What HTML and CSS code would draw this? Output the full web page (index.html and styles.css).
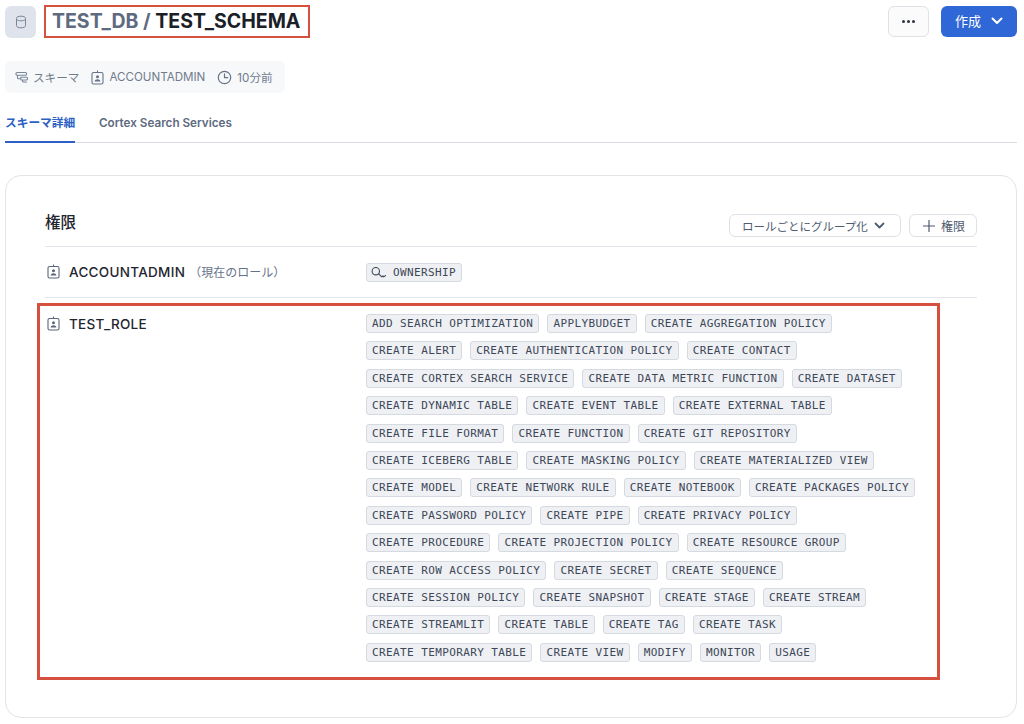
FILE: index.html
```html
<!DOCTYPE html>
<html lang="ja">
<head>
<meta charset="utf-8">
<title>TEST_SCHEMA</title>
<link rel="stylesheet" href="styles.css">
</head>
<body>
<div class="page">
  <header class="top">
    <div class="db-icon">
      <svg width="12" height="14" viewBox="0 0 12 14" fill="none" stroke="#7a8599" stroke-width="1"><path d="M1.500 3.300C1.500 2 3.500 1.200 6 1.200s4.500.8 4.500 2.100v7.400c0 1.300-2 2.100-4.500 2.100s-4.500-.8-4.500-2.100z"/><path d="M1.500 4.300C2.300 5.300 4 5.800 6 5.800s3.700-.5 4.500-1.500"/></svg>
    </div>
    <h1 class="title"><span class="title-db">TEST_DB /</span> TEST_SCHEMA</h1>
    <div class="actions">
      <button class="more"><span class="dot"></span><span class="dot"></span><span class="dot"></span></button>
      <button class="create">作成
        <svg width="12" height="8" viewBox="0 0 12 8" fill="none" stroke="#fff" stroke-width="2" stroke-linecap="round" stroke-linejoin="round"><path d="M1.500 1.500 6 6l4.500-4.500"/></svg>
      </button>
    </div>
  </header>

  <div class="meta">
    <span class="meta-item">
      <svg width="13" height="13" viewBox="0 0 13 13" fill="none" stroke="#7a8599" stroke-width="1.100" stroke-linecap="round" stroke-linejoin="round"><path d="M2 1.500h8.500a1 1 0 0 1 1 1v.7a1 1 0 0 1-1 1H2a1 1 0 0 1-1-1v-.7a1 1 0 0 1 1-1ZM2.500 4.500v2.200a1 1 0 0 0 1 1h2M5.800 6.200h5.400a1 1 0 0 1 0 2.800H6.800a1 1 0 0 1-1-1V6.200ZM7.500 9v1a1 1 0 0 0 1 1h3"/></svg>
      スキーマ</span>
    <span class="meta-item">
      <svg width="13" height="15" viewBox="0 0 13 15" fill="none" stroke="#66728a" stroke-width="1.100"><rect x="1" y="2.500" width="11" height="11.500" rx="1.600"/><path d="M6.500 .5v2"/><circle cx="6.500" cy="6.800" r="1.500" fill="#66728a" stroke="none"/><path d="M3.600 11.400c.2-1.500 1.400-2.200 2.900-2.200s2.700.7 2.900 2.200z" fill="#66728a" stroke="none"/></svg>
      ACCOUNTADMIN</span>
    <span class="meta-item">
      <svg width="15" height="15" viewBox="0 0 15 15" fill="none" stroke="#66728a" stroke-width="1.200" stroke-linecap="round" stroke-linejoin="round"><circle cx="7.500" cy="7.500" r="6.200"/><path d="M7.500 3.800v3.900h3.200"/></svg>
      10分前</span>
  </div>

  <nav class="tabs">
    <a class="tab tab-active">スキーマ詳細</a>
    <a class="tab">Cortex Search Services</a>
  </nav>

  <section class="card">
    <div class="card-head">
      <h2 class="card-title">権限</h2>
      <div class="card-actions">
        <button class="ghost">ロールごとにグループ化
          <svg width="11" height="8" viewBox="0 0 11 8" fill="none" stroke="#4f5b70" stroke-width="1.800" stroke-linecap="round" stroke-linejoin="round"><path d="M1.500 1.500 5.500 5.500l4-4"/></svg>
        </button>
        <button class="ghost ghost-add">
          <svg width="12" height="12" viewBox="0 0 12 12" fill="none" stroke="#4f5b70" stroke-width="1.200" stroke-linecap="round"><path d="M6 .5v11M.5 6h11"/></svg>
          権限</button>
      </div>
    </div>

    <div class="row row-first">
      <div class="role">
        <svg width="13" height="15" viewBox="0 0 13 15" fill="none" stroke="#5b667b" stroke-width="1.100"><rect x="1" y="2.500" width="11" height="11.500" rx="1.600"/><path d="M6.500 .5v2"/><circle cx="6.500" cy="6.800" r="1.500" fill="#5b667b" stroke="none"/><path d="M3.600 11.400c.2-1.500 1.400-2.200 2.900-2.200s2.700.7 2.900 2.200z" fill="#5b667b" stroke="none"/></svg>
        <span class="role-name">ACCOUNTADMIN</span>
        <span class="role-note">（現在のロール）</span>
      </div>
      <div class="tags">
        <span class="tag tag-icon">
          <svg width="16" height="11" viewBox="0 0 16 11" fill="none" stroke="#3d4757" stroke-width="1.100" stroke-linecap="round"><circle cx="4.800" cy="4.200" r="3.700"/><path d="M7.600 6.800 10.800 9.800l1.200-.8.8.8 1.700-1.200"/></svg>
          OWNERSHIP</span>
      </div>
    </div>

    <div class="row row-last">
      <div class="role">
        <svg width="13" height="15" viewBox="0 0 13 15" fill="none" stroke="#5b667b" stroke-width="1.100"><rect x="1" y="2.500" width="11" height="11.500" rx="1.600"/><path d="M6.500 .5v2"/><circle cx="6.500" cy="6.800" r="1.500" fill="#5b667b" stroke="none"/><path d="M3.600 11.400c.2-1.500 1.400-2.200 2.900-2.200s2.700.7 2.900 2.200z" fill="#5b667b" stroke="none"/></svg>
        <span class="role-name">TEST_ROLE</span>
      </div>
      <div class="tags">
        <span class="tag">ADD SEARCH OPTIMIZATION</span>
        <span class="tag">APPLYBUDGET</span>
        <span class="tag">CREATE AGGREGATION POLICY</span>
        <span class="tag">CREATE ALERT</span>
        <span class="tag">CREATE AUTHENTICATION POLICY</span>
        <span class="tag">CREATE CONTACT</span>
        <span class="tag">CREATE CORTEX SEARCH SERVICE</span>
        <span class="tag">CREATE DATA METRIC FUNCTION</span>
        <span class="tag">CREATE DATASET</span>
        <span class="tag">CREATE DYNAMIC TABLE</span>
        <span class="tag">CREATE EVENT TABLE</span>
        <span class="tag">CREATE EXTERNAL TABLE</span>
        <span class="tag">CREATE FILE FORMAT</span>
        <span class="tag">CREATE FUNCTION</span>
        <span class="tag">CREATE GIT REPOSITORY</span>
        <span class="tag">CREATE ICEBERG TABLE</span>
        <span class="tag">CREATE MASKING POLICY</span>
        <span class="tag">CREATE MATERIALIZED VIEW</span>
        <span class="tag">CREATE MODEL</span>
        <span class="tag">CREATE NETWORK RULE</span>
        <span class="tag">CREATE NOTEBOOK</span>
        <span class="tag">CREATE PACKAGES POLICY</span>
        <span class="tag">CREATE PASSWORD POLICY</span>
        <span class="tag">CREATE PIPE</span>
        <span class="tag">CREATE PRIVACY POLICY</span>
        <span class="tag">CREATE PROCEDURE</span>
        <span class="tag">CREATE PROJECTION POLICY</span>
        <span class="tag">CREATE RESOURCE GROUP</span>
        <span class="tag">CREATE ROW ACCESS POLICY</span>
        <span class="tag">CREATE SECRET</span>
        <span class="tag">CREATE SEQUENCE</span>
        <span class="tag">CREATE SESSION POLICY</span>
        <span class="tag">CREATE SNAPSHOT</span>
        <span class="tag">CREATE STAGE</span>
        <span class="tag">CREATE STREAM</span>
        <span class="tag">CREATE STREAMLIT</span>
        <span class="tag">CREATE TABLE</span>
        <span class="tag">CREATE TAG</span>
        <span class="tag">CREATE TASK</span>
        <span class="tag">CREATE TEMPORARY TABLE</span>
        <span class="tag">CREATE VIEW</span>
        <span class="tag">MODIFY</span>
        <span class="tag">MONITOR</span>
        <span class="tag">USAGE</span>
      </div>
      <div class="highlight"></div>
    </div>
  </section>
</div>
</body>
</html>
```

FILE: styles.css
```css
* { box-sizing: border-box; }
html, body { margin: 0; padding: 0; background: #fff; }
body {
  font-family: Inter, "Noto Sans CJK JP", sans-serif;
  color: #1e252f;
  width: 1024px;
  height: 724px;
  overflow: hidden;
}
button { font-family: inherit; cursor: pointer; }
.page { padding: 5px 7px 0 5px; }

.top { display: flex; align-items: center; height: 33px; }
.db-icon {
  width: 31px; height: 32px; border-radius: 6px; background: #dfe3ec;
  display: flex; align-items: center; justify-content: center;
}
.title {
  margin: 0 0 0 8px;
  height: 33px;
  padding: 0 8px 0 6px;
  border: 2px solid #d5503e;
  font-size: 19.500px; font-weight: 700; line-height: 29px;
  color: #1b2028;
  white-space: nowrap;
}
.title-db { color: #5d6a80; }
.actions { margin-left: auto; display: flex; gap: 12px; align-items: center; }
.more {
  width: 41px; height: 31px; padding: 0; background: #fbfbfc;
  border: 1px solid #dfe1e6; border-radius: 6px;
  display: flex; align-items: center; justify-content: center; gap: 2px;
}
.dot { width: 3px; height: 3px; border-radius: 50%; background: #2a3240; }
.create {
  width: 76px; height: 31px; border: 0; border-radius: 6px; background: #2f67d6; color: #fff;
  font-size: 13px; padding: 0 0 2px;
  display: flex; align-items: center; justify-content: center; gap: 10px;
}

.meta {
  margin-top: 23px; width: 280px; height: 32px; background: #f7f8f9; border-radius: 6px;
  display: flex; align-items: center; padding-left: 10px; gap: 12px;
  font-size: 11.600px; color: #707b8e;
}
.meta-item { display: flex; align-items: center; gap: 5px; white-space: nowrap; }

.tabs { margin-top: 18px; display: flex; gap: 24px; height: 32px; border-bottom: 1px solid #d8dbe3; }
.tab {
  height: 32px; font-size: 11.700px; font-weight: 600; line-height: 25px; color: #5d6a80; white-space: nowrap;
}
.tab-active { color: #2d5fc4; border-bottom: 2px solid #2d5fc4; width: 70px; font-weight: 700; }

.card {
  margin-top: 32px; height: 543px; border: 1px solid #e2e4e8; border-radius: 16px;
  padding: 39px 39px 0 39px;
}
.card-head {
  display: flex; justify-content: space-between; align-items: center;
  height: 32px; padding-bottom: 10px; border-bottom: 1px solid #e3e5ea;
}
.card-title {
  margin: 0; align-self: flex-start; font-size: 15.500px; line-height: 16px; font-weight: 500; color: #1e252f;
}
.card-actions { display: flex; gap: 8px; }
.ghost {
  height: 23px; border: 1px solid #dfe1e6; border-radius: 6px; background: #fff; color: #4f5b70;
  font-size: 11.500px; padding: 0 0 0 12px; width: 172px;
  display: flex; align-items: center; gap: 6px; white-space: nowrap;
}
.ghost-add { width: 68px; gap: 6px; padding-left: 13px; font-size: 12px; }

.row { display: flex; position: relative; }
.row-first { padding: 16px 0 15px; border-bottom: 1px solid #e3e5ea; }
.row-first .role { height: 17px; }
.row-last { padding: 16px 0 0; }
.role {
  width: 321px; flex: none; display: flex; align-items: center; gap: 9px; height: 19px;
  padding-left: 2px;
}
.role-name { font-size: 13.500px; font-weight: 500; letter-spacing: .3px; color: #1e252f; }
.role-note { font-size: 12px; color: #66728a; margin-left: -5px; }
.tags { display: flex; flex-wrap: wrap; gap: 8.420px 8px; max-width: 556px; }
.tag {
  height: 19px; padding: 0 5.120px; border: 1px solid #d5d9e0; border-radius: 3px; background: #eef0f4;
  font-family: "DejaVu Sans Mono", "Liberation Mono", monospace;
  font-size: 11px; letter-spacing: .38px; line-height: 17px; color: #3d4757;
  display: inline-flex; align-items: center; white-space: nowrap;
}
.tag-icon { gap: 6px; padding-left: 4px; }
.highlight {
  position: absolute; left: -8px; top: 5px; width: 903px; height: 377px;
  border: 3px solid #d5503e; pointer-events: none;
}
```
